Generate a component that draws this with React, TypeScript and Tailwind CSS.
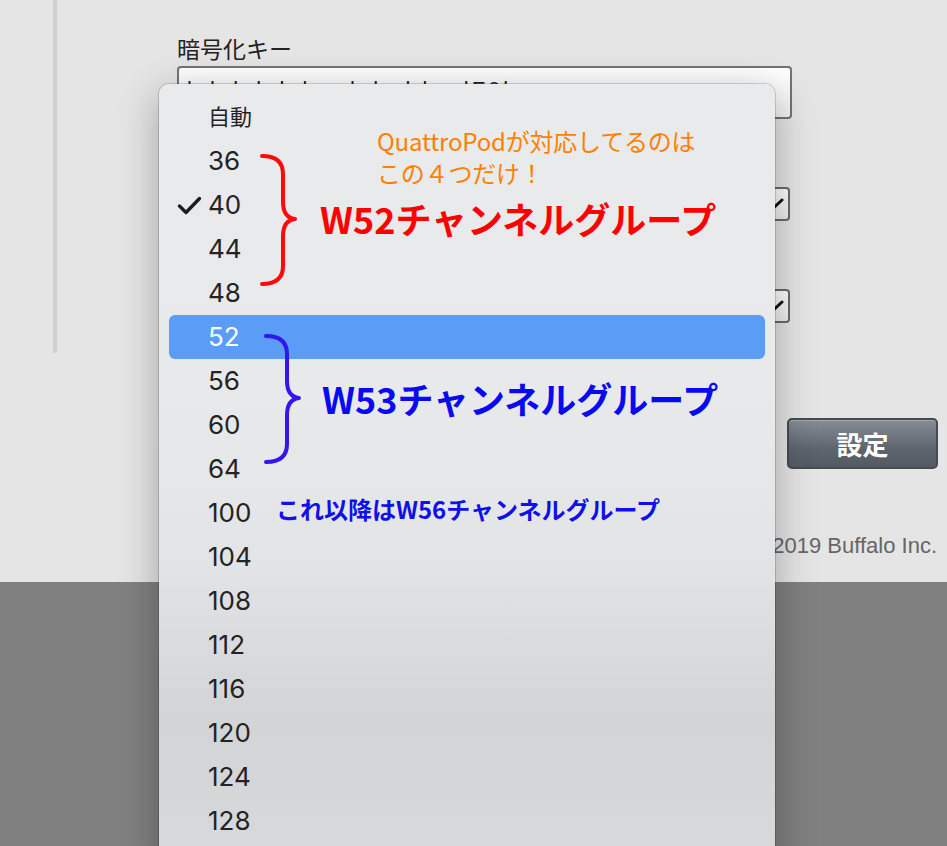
import React from 'react'

const CHANNELS = ['自動', '36', '40', '44', '48', '52', '56', '60', '64', '100', '104', '108', '112', '116', '120', '124', '128']
const CHECKED = '40'
const ACTIVE = '52'

function Brace({ color, height }: { color: string; height: number }) {
  const mid = height / 2
  return (
    <svg width="38" height={height + 4} viewBox={`0 0 38 ${height + 4}`} fill="none">
      <path
        d={`M2 2 C16 2 23 8 23 20 L23 ${mid - 16} C23 ${mid - 6} 27 ${mid} 35 ${mid + 1} C27 ${mid + 2} 23 ${mid + 8} 23 ${mid + 18} L23 ${height - 16} C23 ${height - 4} 16 ${height + 2} 2 ${height + 2}`}
        stroke={color}
        strokeWidth="4"
        strokeLinecap="round"
        strokeLinejoin="round"
      />
    </svg>
  )
}

function Chevron() {
  return (
    <svg width="20" height="12" viewBox="0 0 20 12" fill="none">
      <path d="M2 2 L10 9.5 L18 2" stroke="#111" strokeWidth="3" strokeLinecap="round" strokeLinejoin="round" />
    </svg>
  )
}

function ChannelMenu() {
  return (
    <div className="absolute left-[159px] top-[84px] h-[790px] w-[616px] rounded-t-[10px] bg-[linear-gradient(180deg,#e9eaec_0%,#e8e9eb_40%,#e3e4e6_60%,#d3d4d6_80%,#d8d9db_100%)] pt-[11px] shadow-[0_10px_40px_rgba(0,0,0,0.3)] ring-1 ring-black/15">
      <ul className="flex flex-col">
        {CHANNELS.map((ch) => {
          const active = ch === ACTIVE
          return (
            <li
              key={ch}
              className={`mx-[10px] flex h-[44px] items-center rounded-[6px] text-[26px] leading-[44px] ${
                active ? 'bg-[#5b9cf7] text-white' : 'text-[#232323]'
              }`}
            >
              <span className="flex w-[39px] items-center pl-[8px]">
                {ch === CHECKED && (
                  <svg width="25" height="19" viewBox="0 0 25 19" fill="none">
                    <path d="M2.5 10 L9 16.5 L22.5 2.5" stroke="#1c1c1c" strokeWidth="3.4" strokeLinecap="round" strokeLinejoin="round" />
                  </svg>
                )}
              </span>
              {ch === '自動' ? (
                <span className="-mt-[5px] text-[22px] font-['Noto_Sans_CJK_JP',sans-serif]">{ch}</span>
              ) : (
                <span>{ch}</span>
              )}
            </li>
          )
        })}
      </ul>

      {/* annotations drawn over the menu */}
      <div className="absolute left-[218px] top-[41px] font-['Noto_Sans_CJK_JP',sans-serif] text-[24px] leading-[32px] tracking-[-0.2px] text-[#ff8000]">
        <p>QuattroPodが対応してるのは</p>
        <p>この４つだけ！</p>
      </div>

      <div className="absolute left-[101px] top-[70px]">
        <Brace color="#ff0a0a" height={128} />
      </div>
      <p className="absolute left-[161px] top-[112px] whitespace-nowrap font-['Noto_Sans_CJK_JP',sans-serif] text-[36px] font-bold leading-[44px] text-[#ff0000]">
        W52チャンネルグループ
      </p>

      <div className="absolute left-[105px] top-[250px]">
        <Brace color="#3514ee" height={126} />
      </div>
      <p className="absolute left-[163px] top-[292px] whitespace-nowrap font-['Noto_Sans_CJK_JP',sans-serif] text-[36px] font-bold leading-[44px] text-[#0a0af0]">
        W53チャンネルグループ
      </p>

      <p className="absolute left-[117px] top-[409px] whitespace-nowrap font-['Noto_Sans_CJK_JP',sans-serif] text-[24px] font-bold leading-[32px] text-[#1010e8]">
        これ以降はW56チャンネルグループ
      </p>
    </div>
  )
}

export default function App() {
  return (
    <div className="relative h-[846px] overflow-hidden bg-[#808080] font-[Inter,'Noto_Sans_CJK_JP',sans-serif]">
      <div className="flex h-[582px] bg-[#e5e5e5]">
        <div className="w-[53px]" />
        <div className="h-[353px] w-[4px] bg-[#cfcfcf]" />
        <div className="ml-[120px] flex w-[761px] flex-col pt-[32px]">
          <label className="font-['Noto_Sans_CJK_JP',sans-serif] text-[23px] leading-[32px] text-[#222]">暗号化キー</label>
          <div className="mt-[2px] h-[53px] w-[615px] overflow-hidden rounded-[4px] border-2 border-[#737373] bg-[linear-gradient(180deg,#ffffff,#f1f1f1)] px-[8px] pt-[8px] font-['Liberation_Sans',sans-serif] text-[22px] leading-[28px] tracking-[3px] text-[#222]">
            lalalalalala alal al l a lF0l
          </div>

          <div className="mt-[68px] flex h-[34px] w-[613px] items-center justify-end rounded-[4px] border-2 border-[#6a6a6a] bg-[linear-gradient(180deg,#ffffff,#ededed)] pr-[4px]">
            <Chevron />
          </div>
          <div className="mt-[68px] flex h-[34px] w-[613px] items-center justify-end rounded-[4px] border-2 border-[#6a6a6a] bg-[linear-gradient(180deg,#ffffff,#ededed)] pr-[4px]">
            <Chevron />
          </div>

          <button className="mt-[95px] flex h-[51px] w-[151px] items-center justify-center self-end rounded-[5px] border-2 border-[#464b52] bg-[linear-gradient(180deg,#878d95,#5f656e_60%,#545a62)] font-['Noto_Sans_CJK_JP',sans-serif] text-[26px] font-bold text-white shadow-[inset_0_1px_0_rgba(255,255,255,0.25)]">
            設定
          </button>

          <p className="mr-[1px] mt-[63px] self-end font-['Liberation_Sans',sans-serif] text-[22px] leading-[28px] text-[#666]">
            Copyright © 2019 Buffalo Inc.
          </p>
        </div>
      </div>

      <ChannelMenu />
    </div>
  )
}
